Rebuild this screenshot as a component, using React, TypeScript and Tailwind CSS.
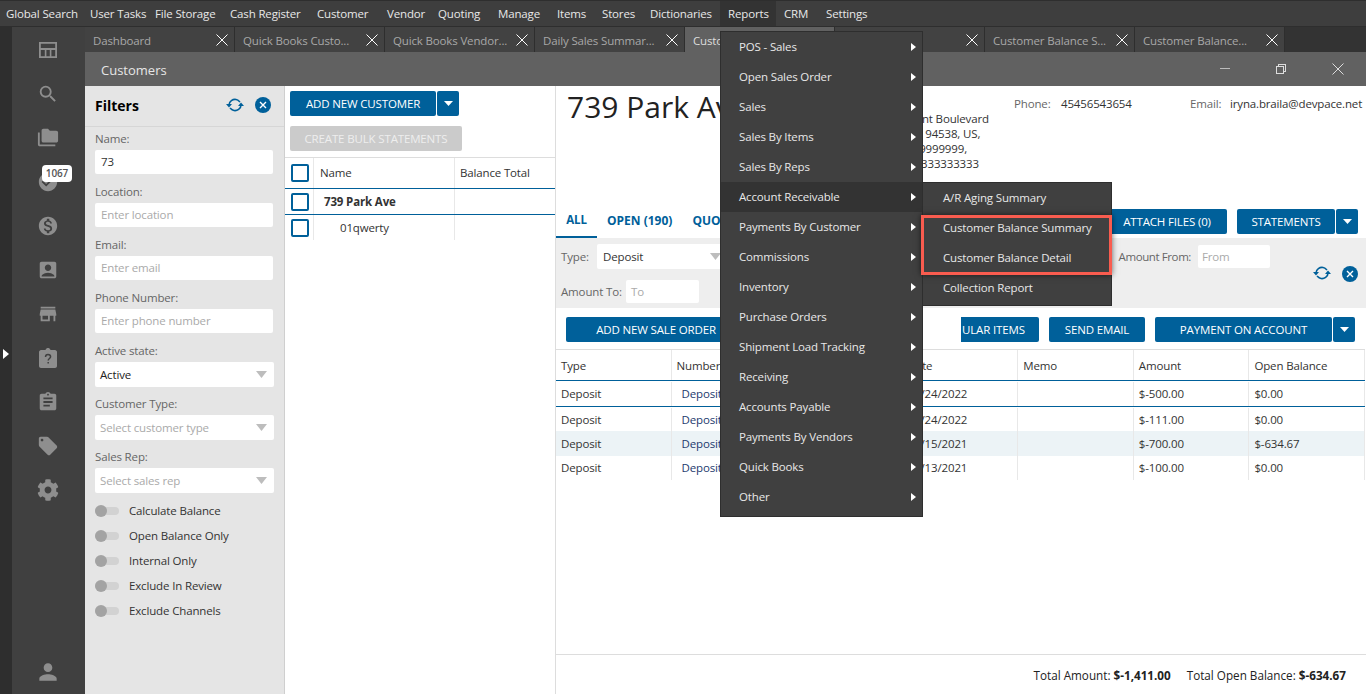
import {
  MdAccountBox,
  MdAssignment,
  MdCheckCircle,
  MdFolderCopy,
  MdLocalOffer,
  MdMonetizationOn,
  MdPerson,
  MdSearch,
  MdStore,
} from "react-icons/md";
import { FaCog } from "react-icons/fa";

const topMenu = [
  { label: "Global Search", w: "w-[82px]" },
  { label: "User Tasks", w: "w-[65px]" },
  { label: "File Storage", w: "w-[75px]" },
  { label: "Cash Register", w: "w-[87px]" },
  { label: "Customer", w: "w-[70px]" },
  { label: "Vendor", w: "w-[51px]" },
  { label: "Quoting", w: "w-[60px]" },
  { label: "Manage", w: "w-[59px]" },
  { label: "Items", w: "w-[45px]" },
  { label: "Stores", w: "w-[48px]" },
  { label: "Dictionaries", w: "w-[78px]" },
  { label: "Reports", w: "w-[56px]" },
  { label: "CRM", w: "w-[42px]" },
  { label: "Settings", w: "w-[60px]" },
];
const tabs = ["Dashboard", "Quick Books Custo...", "Quick Books Vendor...", "Daily Sales Summar...", "Custo", "", "Customer Balance S...", "Customer Balance..."];
const reports = ["POS - Sales", "Open Sales Order", "Sales", "Sales By Items", "Sales By Reps", "Account Receivable", "Payments By Customer", "Commissions", "Inventory", "Purchase Orders", "Shipment Load Tracking", "Receiving", "Accounts Payable", "Payments By Vendors", "Quick Books", "Other"];
const receivable = ["A/R Aging Summary", "Customer Balance Summary", "Customer Balance Detail", "Collection Report"];
const toggles = ["Calculate Balance", "Open Balance Only", "Internal Only", "Exclude In Review", "Exclude Channels"];
const rows = [
  { date: "03/24/2022", amount: "$-500.00", open: "$0.00", cls: "border-b border-[#00609a] h-[26px] pt-px" },
  { date: "03/24/2022", amount: "$-111.00", open: "$0.00", cls: "h-[24px] pt-px" },
  { date: "04/15/2021", amount: "$-700.00", open: "$-634.67", cls: "bg-[#ecf3f6] h-[25px]" },
  { date: "04/13/2021", amount: "$-100.00", open: "$0.00", cls: "h-[24px]" },
];

const X = ({ size = 12 }: { size?: number }) => (
  <svg width={size} height={size} viewBox="0 0 12 12" fill="none" stroke="currentColor" strokeWidth="1">
    <path d="M0.5 0.5 L11.5 11.5 M11.5 0.5 L0.5 11.5" />
  </svg>
);

const Arrow = () => (
  <svg width="5" height="8" viewBox="0 0 5 8" className="fill-white">
    <path d="M0 0 L5 4 L0 8 Z" />
  </svg>
);

const Caret = () => (
  <svg width="9" height="5" viewBox="0 0 9 5" className="fill-white">
    <path d="M0 0 H9 L4.5 5 Z" />
  </svg>
);

const SelectCaret = () => (
  <svg width="11" height="7" viewBox="0 0 11 7" className="fill-[#bdbdbd]">
    <path d="M0 0 H11 L5.5 7 Z" />
  </svg>
);

const Refresh = () => (
  <svg width="18" height="14" viewBox="0 0 18 14" fill="none" stroke="#00609a" strokeWidth="1.6">
    <path d="M3 7 C3 3 7 1 10 1.5 C12 1.8 13 3 14 4" />
    <path d="M15 7 C15 11 11 13 8 12.5 C6 12.2 5 11 4 10" />
    <path d="M0 6 H6 L3 9.5 Z" fill="#00609a" stroke="none" />
    <path d="M12 8 H18 L15 4.5 Z" fill="#00609a" stroke="none" />
  </svg>
);

const CloseDot = () => (
  <div className="w-4 h-4 rounded-full bg-[#00609a] flex items-center justify-center text-white">
    <svg width="8" height="8" viewBox="0 0 8 8" fill="none" stroke="currentColor" strokeWidth="1.4">
      <path d="M1 1 L7 7 M7 1 L1 7" />
    </svg>
  </div>
);

const Check = () => <div className="w-[18px] h-[18px] rounded-[2px] border-2 border-[#00609a] bg-white" />;

const Btn = ({ label, w }: { label: string; w: string }) => (
  <div className={`${w} h-[25px] rounded-[2px] bg-[#00609a] text-white flex items-center justify-center whitespace-nowrap`}>{label}</div>
);

const CaretBtn = () => (
  <div className="w-[22px] h-[25px] rounded-[2px] bg-[#00609a] flex items-center justify-center ml-px">
    <Caret />
  </div>
);

const Field = ({ label, value, placeholder }: { label: string; value?: string; placeholder?: string }) => (
  <div className="h-[53px] pt-[5px]">
    <div className="h-[18px] leading-[14px] text-[#666]">{label}</div>
    <div className={`h-[24px] w-[178px] bg-white rounded-[2px] px-[6px] flex items-center ${value ? "text-[#333]" : "text-[#aaa]"}`}>
      {value || placeholder}
    </div>
  </div>
);

const SelectField = ({ label, value, placeholder }: { label: string; value?: string; placeholder?: string }) => (
  <div className="h-[53px] pt-[5px]">
    <div className="h-[18px] leading-[14px] text-[#666]">{label}</div>
    <div className={`h-[25px] w-[179px] bg-white rounded-[2px] pl-[5px] pr-[7px] flex items-center justify-between ${value ? "text-[#222]" : "text-[#aaa]"}`}>
      {value || placeholder}
      <SelectCaret />
    </div>
  </div>
);

function Sidebar() {
  const iconCls = "w-[22px] h-[22px] text-[#8e8e8e]";
  return (
    <div className="w-[85px] shrink-0 flex bg-[#404040]">
      <div className="w-[12px] bg-[#2e2e2e] flex items-center">
        <svg width="6" height="10" viewBox="0 0 6 10" className="fill-white ml-[3px] mt-[-13px]">
          <path d="M0 0 L6 5 L0 10 Z" />
        </svg>
      </div>
      <div className="relative flex-1 flex flex-col items-center pt-[12px] pr-[1px]">
        <div className="flex flex-col gap-[22px] items-center">
          <svg viewBox="0 0 22 22" className={iconCls} fill="currentColor">
            <path d="M2 3 H20 V19 H2 Z M3.8 4.8 V9 H18.2 V4.8 Z M3.8 11 V17.2 H7.8 V11 Z M9.4 11 V17.2 H12.8 V11 Z M14.4 11 V17.2 H18.2 V11 Z" fillRule="evenodd" />
          </svg>
          <MdSearch className={iconCls} />
          <MdFolderCopy className={iconCls} />
          <MdCheckCircle className={iconCls} />
          <MdMonetizationOn className={iconCls} />
          <MdAccountBox className={iconCls} />
          <MdStore className={iconCls} />
          <svg viewBox="0 0 22 22" className={iconCls} fill="currentColor">
            <path d="M4 3 H8.5 C9 1.5 10 1 11 1 C12 1 13 1.5 13.5 3 H18 C19 3 20 4 20 5 V19 C20 20 19 21 18 21 H4 C3 21 2 20 2 19 V5 C2 4 3 3 4 3 Z" />
            <path d="M8.5 10 C8.5 8 10 7.4 11 7.4 C12.4 7.4 13.6 8.3 13.6 9.7 C13.6 11.4 11.2 11.6 11.2 13.4 M11.2 15 V16.6" fill="none" stroke="#404040" strokeWidth="1.5" />
          </svg>
          <MdAssignment className={iconCls} />
          <MdLocalOffer className={iconCls} />
          <FaCog className={iconCls} />
        </div>
        <MdPerson className="w-[26px] h-[26px] text-[#8e8e8e] mt-auto mb-[9px]" />
        <div className="absolute left-[30px] top-[138px] h-[17px] w-[30px] rounded-[4px] bg-white text-[#555] text-[10px] font-semibold flex items-center justify-center">
          1067
        </div>
      </div>
    </div>
  );
}

function Filters() {
  return (
    <div className="w-[200px] shrink-0 bg-[#e5e5e5] border-r border-[#cfcfcf] flex flex-col">
      <div className="h-[41px] shrink-0 border-b border-[#d6d6d6] pl-[10px] pr-[13px] pb-[2px] flex items-center">
        <span className="text-[14px] font-bold text-black tracking-normal">Filters</span>
        <div className="ml-auto flex items-center gap-[11px]">
          <Refresh />
          <CloseDot />
        </div>
      </div>
      <div className="pl-[10px]">
        <Field label="Name:" value="73" />
        <Field label="Location:" placeholder="Enter location" />
        <Field label="Email:" placeholder="Enter email" />
        <Field label="Phone Number:" placeholder="Enter phone number" />
        <SelectField label="Active state:" value="Active" />
        <SelectField label="Customer Type:" placeholder="Select customer type" />
        <SelectField label="Sales Rep:" placeholder="Select sales rep" />
        <div className="flex flex-col gap-[7px] mt-[4px]">
          {toggles.map((t) => (
            <div key={t} className="h-[18px] flex items-center text-[#333]">
              <div className="relative w-[24px] h-[8px] rounded-full bg-[#d2d2d2] mr-[10px]">
                <div className="absolute left-0 top-[-2px] w-[12px] h-[12px] rounded-full bg-[#a3a3a3]" />
              </div>
              {t}
            </div>
          ))}
        </div>
      </div>
    </div>
  );
}

function CustomerList() {
  return (
    <div className="w-[271px] shrink-0 bg-white border-r border-[#dddddd]">
      <div className="pl-[5px] pt-[5px] flex">
        <Btn label="ADD NEW CUSTOMER" w="w-[146px]" />
        <CaretBtn />
      </div>
      <div className="pl-[5px] pt-[10px]">
        <div className="w-[172px] h-[25px] rounded-[2px] bg-[#cbcbcb] text-[#eeeeee] flex items-center justify-center">CREATE BULK STATEMENTS</div>
      </div>
      <div className="mt-[6px] h-[32px] border-y border-t-[#dddddd] border-b-[#00609a] flex items-center text-[#333]">
        <div className="w-[29px] h-full pl-[6px] flex items-center border-r border-[#e8e8e8]"><Check /></div>
        <div className="w-[141px] pl-[6px] h-full flex items-center border-r border-[#e8e8e8]">Name</div>
        <div className="pl-[5px]">Balance Total</div>
      </div>
      <div className="h-[26px] border-b border-[#00609a] flex items-center text-[#333] font-bold">
        <div className="w-[29px] h-full pl-[6px] flex items-center border-r border-[#e8e8e8]"><Check /></div>
        <div className="w-[141px] pl-[10px] h-full flex items-center border-r border-[#e8e8e8]">739 Park Ave</div>
      </div>
      <div className="h-[25px] flex items-center text-[#333]">
        <div className="w-[29px] h-full pl-[6px] flex items-center border-r border-[#e8e8e8]"><Check /></div>
        <div className="w-[141px] pl-[26px] h-full flex items-center border-r border-[#e8e8e8]">01qwerty</div>
      </div>
    </div>
  );
}

function Detail() {
  return (
    <div className="flex-1 min-w-0 bg-white flex flex-col text-[#333]">
      <div className="h-[119px] shrink-0 flex pl-[11px]">
        <div className="w-[321px]">
          <div className="w-[153px] overflow-hidden text-[30px] tracking-normal leading-[42px] text-[#222] whitespace-nowrap">739 Park Av</div>
        </div>
        <div className="w-[126px] pt-[25px] leading-[15px] whitespace-nowrap">
          <div>Fremont Boulevard</div>
          <div>Union, 94538, US,</div>
          <div>T: 9999999999,</div>
          <div className="pl-[3px]">Fax: 3333333333</div>
        </div>
        <div className="w-[176px] pt-[9px] flex">
          <span className="text-[#666] w-[47px]">Phone:</span>
          <span>45456543654</span>
        </div>
        <div className="pt-[9px] flex whitespace-nowrap">
          <span className="text-[#666] w-[40px]">Email:</span>
          <span>iryna.braila@devpace.net</span>
        </div>
      </div>
      <div className="h-[33px] shrink-0 flex items-stretch font-bold text-[#00609a]">
        <div className="w-[41px] pb-px flex items-center justify-center border-b-2 border-[#00609a]">ALL</div>
        <div className="ml-[10px] pb-px flex items-center text-[12px] tracking-normal">OPEN (190)</div>
        <div className="ml-[20px] pb-px flex items-center text-[12px] tracking-normal">QUOTES</div>
        <div className="ml-auto mr-[8px] flex items-center font-normal text-white">
          <Btn label="ATTACH FILES (0)" w="w-[120px]" />
          <div className="w-[10px]" />
          <Btn label="STATEMENTS" w="w-[98px]" />
          <CaretBtn />
        </div>
      </div>
      <div className="h-[70px] shrink-0 bg-[#eeeeee] flex text-[#666]">
        <div className="w-[756px] pl-[5px] pt-[6px]">
          <div className="flex items-center h-[25px]">
            <span className="w-[36px]">Type:</span>
            <div className="w-[130px] h-[25px] bg-white rounded-[2px] pl-[6px] pr-[6px] flex items-center justify-between text-[#333]">
              Deposit
              <SelectCaret />
            </div>
            <span className="ml-auto mr-[7px] tracking-[-0.4px]">Amount From:</span>
            <div className="w-[72px] h-[23px] bg-white rounded-[2px] px-[4px] flex items-center text-[#aaa] mr-[42px]">From</div>
          </div>
          <div className="flex items-center h-[23px] mt-[11px]">
            <span className="w-[65px]">Amount To:</span>
            <div className="w-[73px] h-[23px] bg-white rounded-[2px] px-[5px] flex items-center text-[#aaa]">To</div>
          </div>
        </div>
        <div className="flex items-start gap-[11px] pt-[28px] ml-[1px]">
          <Refresh />
          <CloseDot />
        </div>
      </div>
      <div className="h-[41px] shrink-0 pl-[10px] pr-[11px] pt-[9px] flex text-white">
        <Btn label="ADD NEW SALE ORDER" w="w-[180px]" />
        <div className="ml-auto w-[78px] h-[25px] rounded-r-[2px] bg-[#00609a] flex items-center pl-px">ULAR ITEMS</div>
        <div className="w-[10px]" />
        <Btn label="SEND EMAIL" w="w-[96px]" />
        <div className="w-[10px]" />
        <Btn label="PAYMENT ON ACCOUNT" w="w-[177px]" />
        <CaretBtn />
      </div>
      <div className="h-[32px] mr-px shrink-0 grid grid-cols-7 border-y border-t-[#dddddd] border-b-[#00609a]">
        {["Type", "Number", "Due Date", "Date", "Memo", "Amount", "Open Balance"].map((h) => (
          <div key={h} className="pl-[5px] pt-px flex items-center border-r border-[#e8e8e8]">{h}</div>
        ))}
      </div>
      {rows.map((r, i) => (
        <div key={i} className={`shrink-0 mr-px grid grid-cols-7 ${r.cls}`}>
          <div className="pl-[5px] flex items-center border-r border-[#e8e8e8]">Deposit</div>
          <div className="pl-[10px] flex items-center border-r border-[#e8e8e8] text-[#1c3a6e]">Deposit</div>
          <div className="border-r border-[#e8e8e8]" />
          <div className="pl-[5px] flex items-center border-r border-[#e8e8e8]">{r.date}</div>
          <div className="border-r border-[#e8e8e8]" />
          <div className="pl-[5px] flex items-center border-r border-[#e8e8e8]">{r.amount}</div>
          <div className="pl-[5px] flex items-center border-r border-[#e8e8e8]">{r.open}</div>
        </div>
      ))}
      <div className="mt-auto h-[40px] shrink-0 border-t border-[#dddddd] flex items-center justify-end pr-[20px] pt-[2px] text-[#222] text-[11.7px] tracking-normal">
        <span>Total Amount: <span className="font-bold">$-1,411.00</span></span>
        <span className="ml-[16px]">Total Open Balance: <span className="font-bold">$-634.67</span></span>
      </div>
    </div>
  );
}

export default function App() {
  return (
    <div className="relative w-[1366px] h-[694px] overflow-hidden flex flex-col bg-[#333] font-['Open_Sans',sans-serif] text-[11.5px] tracking-[-0.15px]">
      <div className="h-[27px] shrink-0 bg-[#3e3e3e] border-t border-[#2e2e2e] border-b border-b-[#2e2e2e] flex text-[#e8e8e8]">
        {topMenu.map((m) => (
          <div key={m.label} className={`${m.w} pl-[8px] first:pl-[6px] flex items-center whitespace-nowrap ${m.label === "Reports" ? "bg-[#333333]" : ""}`}>{m.label}</div>
        ))}
      </div>
      <div className="flex-1 min-h-0 flex">
        <Sidebar />
        <div className="flex-1 min-w-0 flex flex-col">
          <div className="h-[25px] shrink-0 bg-[#333] flex">
            {tabs.map((t, i) => (
              <div key={i} className={`w-[150px] pl-[8px] pr-[6px] pt-px flex items-center justify-between border-r border-[#2e2e2e] ${i === 4 ? "bg-[#616161] text-[#ddd]" : "bg-[#424242] text-[#a8a8a8]"}`}>
                <span className="whitespace-nowrap pt-px">{t}</span>
                <span className="text-white"><X /></span>
              </div>
            ))}
          </div>
          <div className="h-[34px] shrink-0 bg-[#616161] flex items-center pl-[16px] pt-[3px] text-[#e6e6e6] text-[13px] tracking-normal">
            Customers
            <div className="ml-auto flex items-center text-[#dcdcdc] mb-[4px]">
              <div className="w-[10px] h-px bg-[#bbb] mr-[46px]" />
              <div className="relative w-[10px] h-[10px] mr-[46px]">
                <div className="absolute right-0 top-0 w-[8px] h-[8px] border border-[#ddd]" />
                <div className="absolute left-0 bottom-0 w-[8px] h-[8px] border border-[#ddd] bg-[#616161]" />
              </div>
              <div className="mr-[22px]"><X /></div>
            </div>
          </div>
          <div className="flex-1 min-h-0 flex">
            <Filters />
            <CustomerList />
            <Detail />
          </div>
        </div>
      </div>

      <div className="absolute left-[720px] top-[31px] w-[203px] bg-[#404040] border border-[#2e2e2e] pb-[4px] text-[#e8e8e8]">
        {reports.map((r) => (
          <div key={r} className={`h-[30px] pl-[18px] pr-[6px] flex items-center justify-between ${r === "Account Receivable" ? "bg-[#333333]" : ""}`}>
            {r}
            <Arrow />
          </div>
        ))}
      </div>
      <div className="absolute left-[923px] top-[182px] w-[189px] bg-[#404040] border border-[#2e2e2e] border-l-0 pb-[2px] text-[#e8e8e8]">
        {receivable.map((r) => (
          <div key={r} className="h-[30px] pl-[20px] flex items-center">{r}</div>
        ))}
      </div>
      <div className="absolute left-[921px] top-[215px] w-[191px] h-[60px] border-[3px] border-[#f95c4f] shadow-[0_0_6px_rgba(0,0,0,0.6)]" />
    </div>
  );
}
